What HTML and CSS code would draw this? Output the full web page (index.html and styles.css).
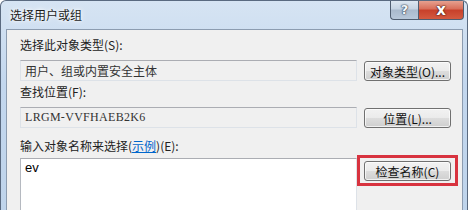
FILE: index.html
```html
<!DOCTYPE html>
<html lang="zh-CN">
<head>
  <meta charset="UTF-8" />
  <title>选择用户或组</title>
  <link rel="stylesheet" href="styles.css">
</head>
<body>
  <div class="window">
    <div class="title-bar">
      <div class="title">选择用户或组</div>
      <div class="caption-buttons">
        <div class="cap-btn help-btn">?</div>
        <div class="cap-btn close-btn">x</div>
      </div>
    </div>

    <div class="frame">
      <div class="panel">
        <div class="label">选择此对象类型(S):</div>
        <div class="field-row">
          <div class="textbox">用户、组或内置安全主体</div>
          <button class="win-btn">对象类型(O)...</button>
        </div>

        <div class="label label-gap">查找位置(F):</div>
        <div class="field-row">
          <div class="textbox mono">LRGM-VVFHAEB2K6</div>
          <button class="win-btn">位置(L)...</button>
        </div>

        <div class="label label-gap-lg">输入对象名称来选择(<span class="link">示例</span>)(E):</div>
        <div class="field-row area-row">
          <div class="textarea">ev</div>
          <div class="btn-col">
            <button class="win-btn highlighted">检查名称(C)</button>
          </div>
        </div>
      </div>
    </div>
  </div>
</body>
</html>
```

FILE: styles.css
```css
html, body {
  margin: 0;
  padding: 0;
  background: #fff;
  overflow: hidden;
}

body {
  width: 468px;
  height: 210px;
  font-family: "Noto Sans CJK SC", "DejaVu Sans", sans-serif;
  font-size: 12px;
  color: #000;
}

.window {
  box-sizing: border-box;
  width: 468px;
  height: 210px;
  border: 1px solid #5a6a80;
  border-bottom: none;
  border-radius: 6px 6px 0 0;
  background: linear-gradient(180deg, #d6e4f3 0%, #c3d7ee 40%, #bfd4eb 100%);
  display: flex;
  flex-direction: column;
  overflow: hidden;
}

/* Title bar */
.title-bar {
  height: 28px;
  display: flex;
  justify-content: space-between;
  align-items: flex-start;
  padding: 0 3px 0 9px;
}

.title {
  line-height: 26px;
  padding-top: 1px;
  color: #1c1c1c;
  text-shadow: 0 0 6px #fff, 0 0 3px #fff;
}

.caption-buttons {
  display: flex;
  margin-top: -1px;
}

.cap-btn {
  box-sizing: border-box;
  height: 20px;
  display: flex;
  align-items: center;
  justify-content: center;
  border: 1px solid #4f5d70;
  border-top: none;
  font-family: "DejaVu Sans", sans-serif;
  font-weight: bold;
}

.help-btn {
  width: 28px;
  border-right: none;
  border-radius: 0 0 0 4px;
  background: linear-gradient(180deg, #dfe8f2 0%, #c5d3e2 48%, #a9b9cc 52%, #b8c8da 100%);
  color: #f4f7fb;
  font-size: 13px;
  text-shadow: 0 0 1px #3a4656, 0 0 1px #3a4656, 0 0 2px #3a4656;
}

.close-btn {
  width: 46px;
  border-radius: 0 0 4px 0;
  background: linear-gradient(180deg, #e8a796 0%, #d9705c 45%, #c8412b 55%, #d45a40 100%);
  color: #fff;
  font-size: 15px;
  text-shadow: 0 0 1px #4a1a10, 0 0 1px #4a1a10, 0 0 2px #4a1a10;
}

/* Frame + inner panel */
.frame {
  flex: 1;
  padding: 0 4px 0 5px;
  display: flex;
  min-height: 0;
}

.panel {
  flex: 1;
  border: 1px solid #8c9cb0;
  border-bottom: none;
  background: #f0f0f0;
  padding: 7px 10px 0 13px;
  overflow: hidden;
}

.label {
  height: 16px;
  line-height: 16px;
  white-space: nowrap;
  color: #222;
}

.label-gap {
  margin-top: 3px;
}

.label-gap-lg {
  margin-top: 10px;
}

.link {
  color: #0066cc;
  text-decoration: underline;
}

.field-row {
  display: flex;
  gap: 7px;
  align-items: flex-start;
  margin-top: 7px;
}

.textbox {
  box-sizing: border-box;
  width: 337px;
  height: 21px;
  line-height: 19px;
  padding: 0 4px;
  border: 1px solid #dde2e8;
  border-top-color: #abadb3;
  background: #f0f0f0;
  color: #333;
  white-space: nowrap;
}

.mono {
  font-family: "Liberation Serif", "DejaVu Serif", serif;
  font-size: 12px;
  letter-spacing: 0.3px;
}

.win-btn {
  box-sizing: border-box;
  width: 87px;
  height: 20px;
  margin-top: 1px;
  padding: 0;
  border: 1px solid #707070;
  border-radius: 3px;
  background: linear-gradient(180deg, #f2f2f2 0%, #ebebeb 49%, #dddddd 51%, #cfcfcf 100%);
  font-family: "Noto Sans CJK SC", "DejaVu Sans", sans-serif;
  font-size: 12px;
  color: #111;
  box-shadow: inset 0 0 0 1px rgba(255, 255, 255, 0.7);
}

.area-row {
  margin-top: 4px;
}

.textarea {
  box-sizing: border-box;
  width: 337px;
  height: 56px;
  padding: 2px 4px;
  border: 1px solid #dde2e8;
  border-bottom: none;
  border-top-color: #abadb3;
  border-left-color: #b5b9c0;
  background: #fff;
  font-family: "Liberation Sans", Arial, sans-serif;
  font-size: 13px;
  line-height: 14px;
}

.btn-col {
  position: relative;
  padding-top: 2px;
}

/* red annotation box drawn over the dialog */
.highlighted::after {
  content: "";
  position: absolute;
  left: -7px;
  right: -7px;
  top: -3px;
  height: 25px;
  border: 3px solid #d8333f;
}
```
